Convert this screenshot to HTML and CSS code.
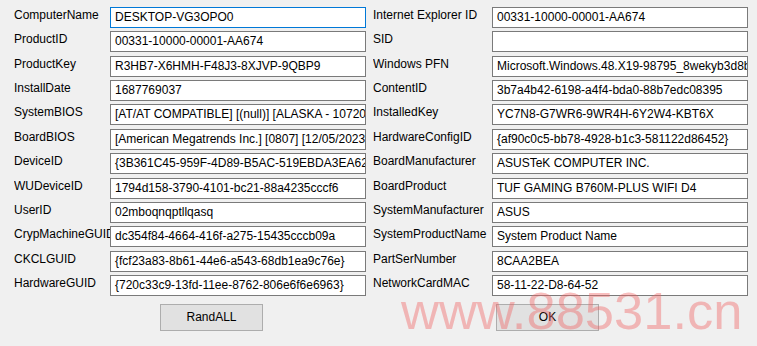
FILE: index.html
```html
<!DOCTYPE html>
<html>
<head>
<meta charset="utf-8">
<link rel="stylesheet" href="styles.css">
</head>
<body>
<div class="dialog">
  <div class="grid">
    <div class="label">ComputerName</div><div class="box focus">DESKTOP-VG3OPO0</div>
    <div class="label">Internet Explorer ID</div><div class="box">00331-10000-00001-AA674</div>

    <div class="label">ProductID</div><div class="box">00331-10000-00001-AA674</div>
    <div class="label">SID</div><div class="box"></div>

    <div class="label">ProductKey</div><div class="box">R3HB7-X6HMH-F48J3-8XJVP-9QBP9</div>
    <div class="label">Windows PFN</div><div class="box">Microsoft.Windows.48.X19-98795_8wekyb3d8bbwe</div>

    <div class="label">InstallDate</div><div class="box">1687769037</div>
    <div class="label">ContentID</div><div class="box">3b7a4b42-6198-a4f4-bda0-88b7edc08395</div>

    <div class="label">SystemBIOS</div><div class="box">[AT/AT COMPATIBLE] [(null)] [ALASKA - 1072009]</div>
    <div class="label">InstalledKey</div><div class="box">YC7N8-G7WR6-9WR4H-6Y2W4-KBT6X</div>

    <div class="label">BoardBIOS</div><div class="box">[American Megatrends Inc.] [0807] [12/05/2023]</div>
    <div class="label">HardwareConfigID</div><div class="box">{af90c0c5-bb78-4928-b1c3-581122d86452}</div>

    <div class="label">DeviceID</div><div class="box">{3B361C45-959F-4D89-B5AC-519EBDA3EA62}</div>
    <div class="label">BoardManufacturer</div><div class="box">ASUSTeK COMPUTER INC.</div>

    <div class="label">WUDeviceID</div><div class="box">1794d158-3790-4101-bc21-88a4235cccf6</div>
    <div class="label">BoardProduct</div><div class="box">TUF GAMING B760M-PLUS WIFI D4</div>

    <div class="label">UserID</div><div class="box">02mboqnqptllqasq</div>
    <div class="label">SystemManufacturer</div><div class="box">ASUS</div>

    <div class="label">CrypMachineGUID</div><div class="box">dc354f84-4664-416f-a275-15435cccb09a</div>
    <div class="label">SystemProductName</div><div class="box">System Product Name</div>

    <div class="label">CKCLGUID</div><div class="box">{fcf23a83-8b61-44e6-a543-68db1ea9c76e}</div>
    <div class="label">PartSerNumber</div><div class="box">8CAA2BEA</div>

    <div class="label">HardwareGUID</div><div class="box">{720c33c9-13fd-11ee-8762-806e6f6e6963}</div>
    <div class="label">NetworkCardMAC</div><div class="box">58-11-22-D8-64-52</div>
  </div>
  <div class="buttons">
    <button class="btn">RandALL</button>
    <button class="btn">OK</button>
  </div>
  <div class="watermark">www.88531.cn</div>
</div>
</body>
</html>
```

FILE: styles.css
```css
html, body {
  margin: 0;
  padding: 0;
  background: #f0f0f0;
}
body {
  width: 757px;
  height: 346px;
  overflow: hidden;
  font-family: "Liberation Sans", Arial, sans-serif;
  font-size: 12px;
  color: #000;
}
.dialog {
  position: relative;
  width: 757px;
  height: 346px;
}
.grid {
  display: grid;
  grid-template-columns: 96px 256px 119px 256px;
  column-gap: 0;
  row-gap: 3.36px;
  padding: 7px 0 0 14px;
}
.grid > .box:nth-child(4n+2) {
  margin-right: 7px;
  width: 256px;
  box-sizing: border-box;
}
.grid {
  grid-template-columns: 96px 263px 119px 256px;
}
.label {
  height: 21px;
  line-height: 15px;
  padding-top: 1px;
  box-sizing: border-box;
  white-space: nowrap;
  overflow: hidden;
}
.box {
  height: 21px;
  box-sizing: border-box;
  border: 1px solid #7a7a7a;
  background: #fff;
  line-height: 19px;
  padding: 0 0 0 4px;
  white-space: nowrap;
  overflow: hidden;
}
.box.focus {
  border-color: #0078d7;
}
.buttons {
  display: flex;
  gap: 233px;
  padding: 8px 0 0 160px;
}
.btn {
  width: 103px;
  height: 27px;
  box-sizing: border-box;
  background: #e1e1e1;
  border: 1px solid #adadad;
  border-radius: 0;
  font-family: "Liberation Sans", Arial, sans-serif;
  font-size: 12px;
  color: #000;
  padding: 0;
}
.watermark {
  position: absolute;
  left: 401px;
  top: 281px;
  font-family: "Liberation Sans", Arial, sans-serif;
  font-size: 52.5px;
  line-height: 60px;
  color: rgba(240, 100, 100, 0.42);
  white-space: nowrap;
  pointer-events: none;
}
```
